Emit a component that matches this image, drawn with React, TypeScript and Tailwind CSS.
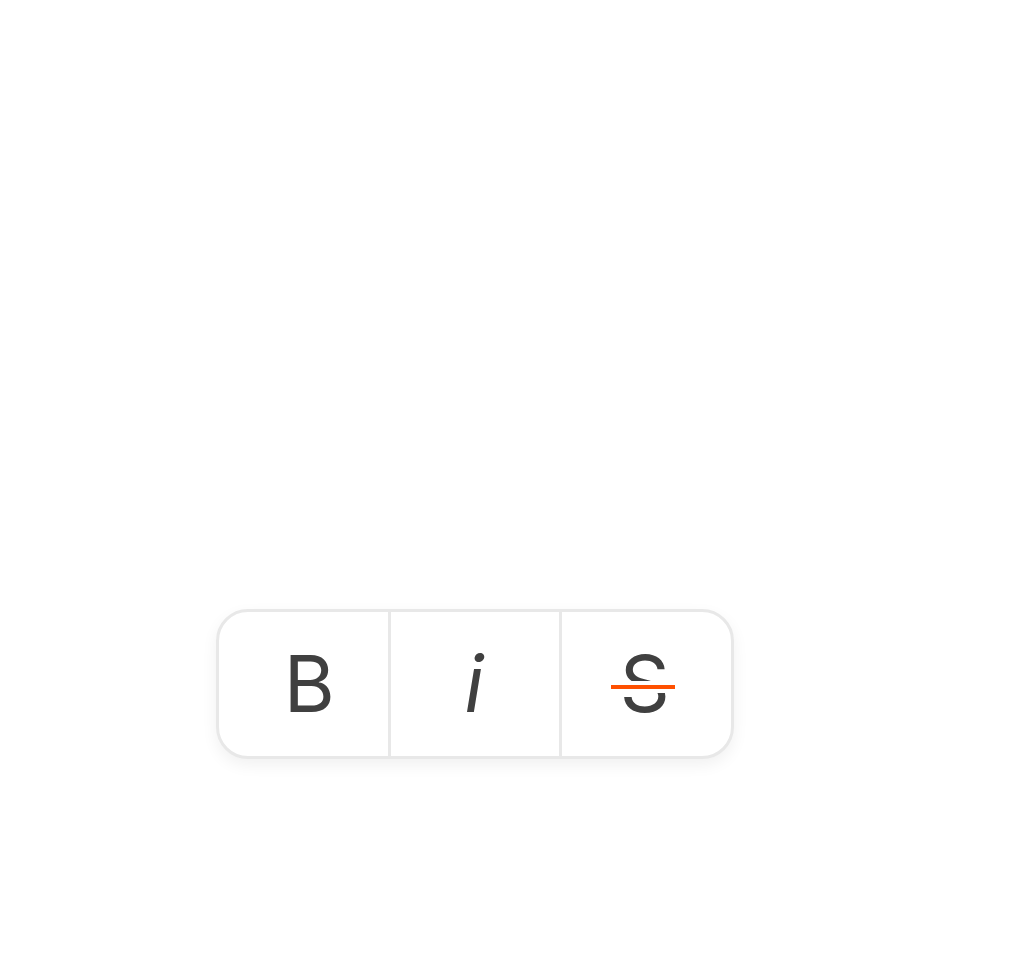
import React from "react";

export default function App() {
  return (
    <div className="w-[1036px] h-[974px] bg-white pt-[609px] pl-[216px]" style={{ fontFamily: "Inter, 'Noto Sans', sans-serif" }}>
      <div className="flex w-[518px] h-[150px] rounded-[32px] border-[3px] border-[#e8e8e8] bg-white shadow-[0_6px_16px_rgba(0,0,0,0.06)] overflow-hidden text-[#404040]">
        <div className="flex-1 flex items-center justify-center">
          <span className="ml-[12px] text-[78px] leading-none font-normal">B</span>
        </div>
        <div className="w-[3px] bg-[#e8e8e8]" />
        <div className="flex-1 flex items-center justify-center">
          <span className="mr-[2px] text-[78px] leading-none italic font-normal">i</span>
        </div>
        <div className="w-[3px] bg-[#e8e8e8]" />
        <div className="flex-1 flex items-center justify-center">
          <span className="relative mr-[4px] text-[78px] leading-none font-normal">
            S
            <span className="absolute left-[calc(50%-2px)] top-[36px] -translate-x-1/2 w-[64px] h-[12px] border-y-4 border-white bg-[#ff5000] box-border" />
          </span>
        </div>
      </div>
    </div>
  );
}
